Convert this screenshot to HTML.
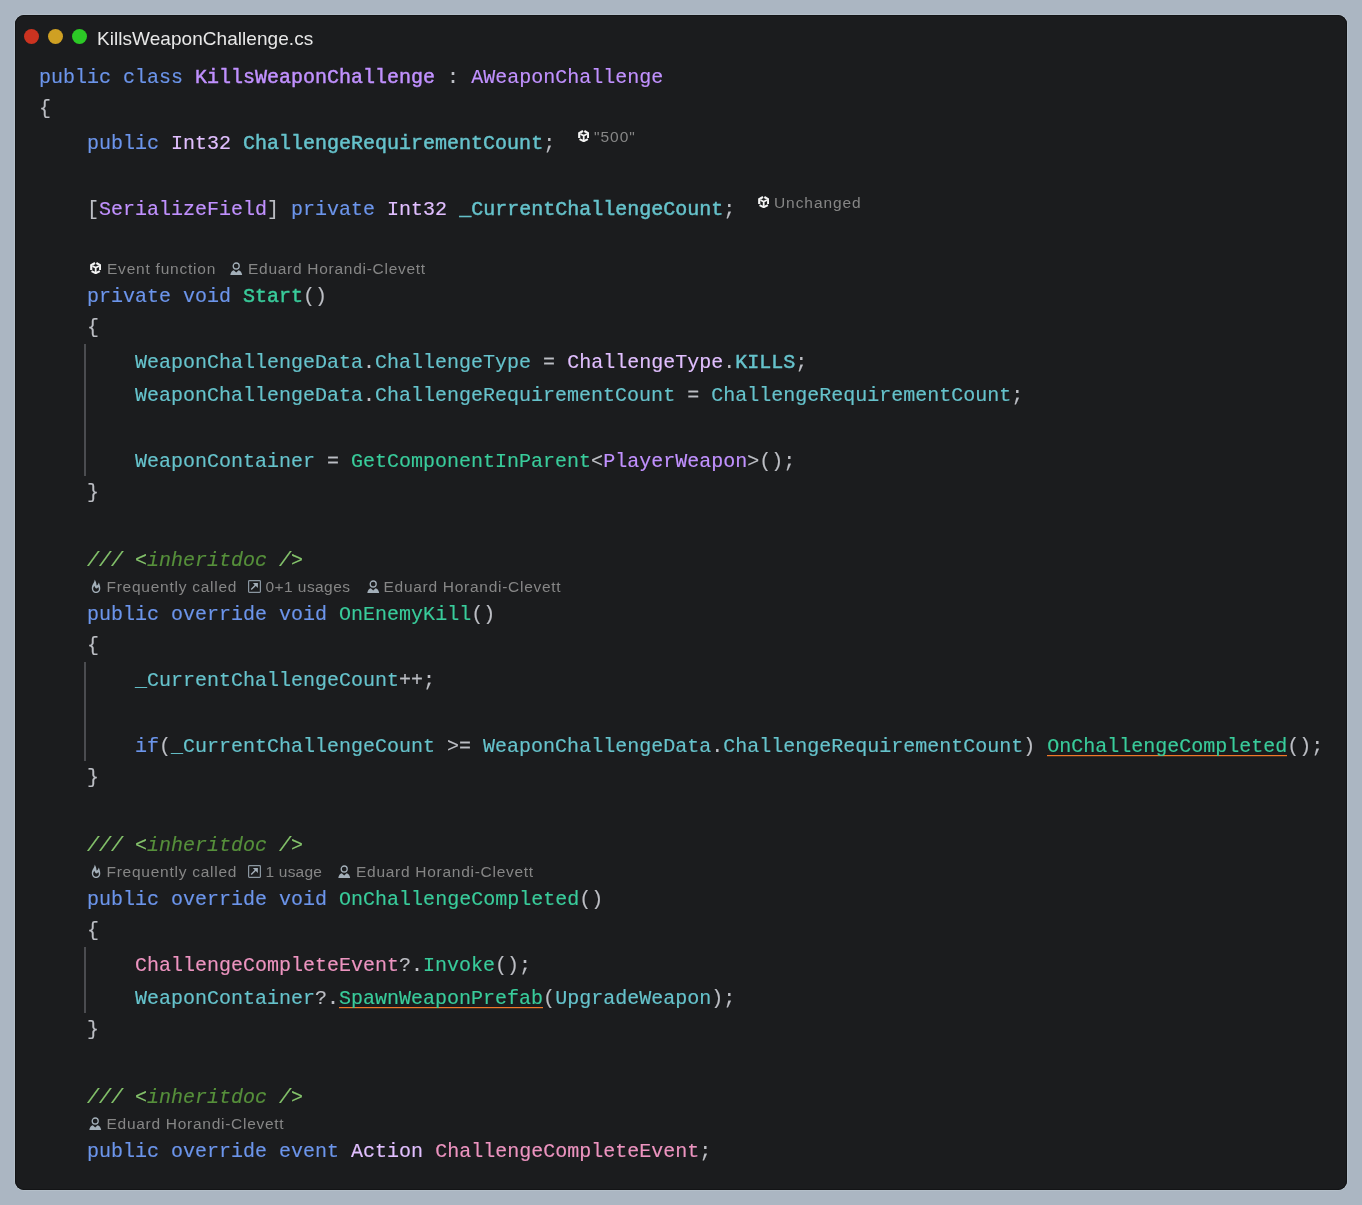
<!DOCTYPE html>
<html><head><meta charset="utf-8"><title>KillsWeaponChallenge.cs</title><style>
html,body{margin:0;padding:0}
body{width:1362px;height:1205px;background:#abb6c2;position:relative;overflow:hidden}
.wrap{position:absolute;left:0;top:0;width:1362px;height:1205px;will-change:transform}
.win{position:absolute;left:15px;top:15px;width:1332px;height:1175px;background:#1b1c1e;border-radius:9px;box-shadow:0 0 0 1px #b4bfc9, inset 0 0 0 1px #131416}
.dot{position:absolute;width:15px;height:15px;border-radius:50%}
.title{position:absolute;left:97px;top:28px;letter-spacing:0.05px;font-family:"Liberation Sans",sans-serif;font-size:19px;line-height:21px;color:#e8e8e8;white-space:pre}
.l{position:absolute;left:39px;height:33px;line-height:33px;font-family:"Liberation Mono",monospace;font-size:20px;white-space:pre;color:#bcbec4;-webkit-text-stroke:0.15px currentColor}
.k{color:#6c95eb}
.c{color:#c191ff}
.cb{color:#c191ff;-webkit-text-stroke:0.45px #c191ff}
.s{color:#e1bfff}
.f{color:#66c3cc}
.fb{color:#66c3cc;-webkit-text-stroke:0.45px #66c3cc}
.m{color:#39cc9b}
.mb{color:#39cc9b;-webkit-text-stroke:0.45px #39cc9b}
.mu{color:#39cc9b}
.ul{position:absolute;height:1px;background:#f07828;box-shadow:0 0.5px 0 rgba(240,120,40,0.4)}
.e{color:#ed94c0}
.p{color:#bcbec4}
.br{position:relative;top:-2px}
.d{color:#85c46c;font-style:italic}
.dt{color:#56903b;font-style:italic}
.ht{position:absolute;font-family:"Liberation Sans",sans-serif;font-size:15.5px;line-height:21px;color:#868686;white-space:pre}
.ic{position:absolute}
.g{position:absolute;left:84px;width:2px;background:#4b4c50}
</style></head>
<body><div class="wrap">
<div class="win"></div>
<div class="dot" style="left:24px;top:29px;background:#cc3320"></div>
<div class="dot" style="left:48px;top:29px;background:#cfa023"></div>
<div class="dot" style="left:72px;top:29px;background:#2cc926"></div>
<div class="title">KillsWeaponChallenge.cs</div>
<div class="ul" style="left:1047px;top:755px;width:240px"></div>
<div class="ul" style="left:339px;top:1007px;width:204px"></div>
<div class="g" style="top:344px;height:132px"></div>
<div class="g" style="top:662px;height:99px"></div>
<div class="g" style="top:947px;height:66px"></div>
<div class="l" style="top:61px"><span class="k">public</span><span class="p"> </span><span class="k">class</span><span class="p"> </span><span class="cb">KillsWeaponChallenge</span><span class="p"> : </span><span class="c">AWeaponChallenge</span></div>
<div class="l" style="top:94px"><span class="p br">{</span></div>
<div class="l" style="top:127px"><span class="p">    </span><span class="k">public</span><span class="p"> </span><span class="s">Int32</span><span class="p"> </span><span class="fb">ChallengeRequirementCount</span><span class="p">;</span></div>
<svg class="ic" width="11.4" height="12" viewBox="0 0 12 12.6" style="left:578px;top:130px"><g fill="none" stroke="#f4f4f4" stroke-linejoin="miter" stroke-linecap="butt"><path d="M5.3 1.0 L1.3 3.3 V8.5" stroke-width="2.3"/><path d="M6.7 1.0 L10.7 3.3 V8.5" stroke-width="2.3"/><path d="M1.6 9.6 L6 11.8 L10.4 9.6" stroke-width="2.1"/><path d="M2.6 4.1 L6 6.1 L9.4 4.1 M6 6.1 V11.2" stroke-width="1.9"/></g></svg>
<span class="ht" style="left:594px;top:126px;letter-spacing:1.0px">&quot;500&quot;</span>
<div class="l" style="top:160px"></div>
<div class="l" style="top:193px"><span class="p">    [</span><span class="c">SerializeField</span><span class="p">] </span><span class="k">private</span><span class="p"> </span><span class="s">Int32</span><span class="p"> </span><span class="fb">_CurrentChallengeCount</span><span class="p">;</span></div>
<svg class="ic" width="11.4" height="12" viewBox="0 0 12 12.6" style="left:758px;top:196px"><g fill="none" stroke="#f4f4f4" stroke-linejoin="miter" stroke-linecap="butt"><path d="M5.3 1.0 L1.3 3.3 V8.5" stroke-width="2.3"/><path d="M6.7 1.0 L10.7 3.3 V8.5" stroke-width="2.3"/><path d="M1.6 9.6 L6 11.8 L10.4 9.6" stroke-width="2.1"/><path d="M2.6 4.1 L6 6.1 L9.4 4.1 M6 6.1 V11.2" stroke-width="1.9"/></g></svg>
<span class="ht" style="left:774px;top:192px;letter-spacing:0.925px">Unchanged</span>
<div class="l" style="top:226px"></div>
<svg class="ic" width="11.4" height="12" viewBox="0 0 12 12.6" style="left:90px;top:262px"><g fill="none" stroke="#f4f4f4" stroke-linejoin="miter" stroke-linecap="butt"><path d="M5.3 1.0 L1.3 3.3 V8.5" stroke-width="2.3"/><path d="M6.7 1.0 L10.7 3.3 V8.5" stroke-width="2.3"/><path d="M1.6 9.6 L6 11.8 L10.4 9.6" stroke-width="2.1"/><path d="M2.6 4.1 L6 6.1 L9.4 4.1 M6 6.1 V11.2" stroke-width="1.9"/></g></svg>
<span class="ht" style="left:107px;top:258px;letter-spacing:0.772px">Event function</span>
<svg class="ic" width="12.5" height="13.5" viewBox="0 0 12.5 13.5" style="left:230px;top:261.5px"><circle cx="6.2" cy="4.0" r="3.0" fill="none" stroke="#a3afb9" stroke-width="1.3"/><path d="M0.3 13.1 C0.6 10.5 2 8.7 3.8 8.3 L6.2 10.5 L8.6 8.3 C10.4 8.7 11.9 10.5 12.2 13.1 Z" fill="#a3afb9"/></svg>
<span class="ht" style="left:248px;top:258px;letter-spacing:0.724px">Eduard Horandi-Clevett</span>
<div class="l" style="top:280px"><span class="p">    </span><span class="k">private</span><span class="p"> </span><span class="k">void</span><span class="p"> </span><span class="mb">Start</span><span class="p">()</span></div>
<div class="l" style="top:313px"><span class="p">    </span><span class="p br">{</span></div>
<div class="l" style="top:346px"><span class="p">        </span><span class="f">WeaponChallengeData</span><span class="p">.</span><span class="f">ChallengeType</span><span class="p"> = </span><span class="s">ChallengeType</span><span class="p">.</span><span class="fb">KILLS</span><span class="p">;</span></div>
<div class="l" style="top:379px"><span class="p">        </span><span class="f">WeaponChallengeData</span><span class="p">.</span><span class="f">ChallengeRequirementCount</span><span class="p"> = </span><span class="f">ChallengeRequirementCount</span><span class="p">;</span></div>
<div class="l" style="top:412px"></div>
<div class="l" style="top:445px"><span class="p">        </span><span class="f">WeaponContainer</span><span class="p"> = </span><span class="m">GetComponentInParent</span><span class="p">&lt;</span><span class="c">PlayerWeapon</span><span class="p">&gt;();</span></div>
<div class="l" style="top:478px"><span class="p">    </span><span class="p br">}</span></div>
<div class="l" style="top:511px"></div>
<div class="l" style="top:544px"><span class="p">    </span><span class="d">/// &lt;</span><span class="dt">inheritdoc</span><span class="d"> /&gt;</span></div>
<svg class="ic" width="10" height="14.5" viewBox="0 0 10 14.5" style="left:90.5px;top:578.5px"><path d="M3.6 0.4 C4 3.2 1 5 0.8 9 C0.7 12 2.8 14.1 5 14.1 C7.4 14.1 9.3 12.2 9.3 9.4 C9.3 7 8.5 5.2 7.8 3.4 C7.4 4.9 6.6 6 5.5 6.6 C5.5 4.3 5 2.2 3.6 0.4 Z M3.5 6.8 C3.7 8.2 4.5 9.4 5.5 9.6 C6.3 9.4 6.9 8.8 7.3 8 C7.8 9 8 10 7.7 11 C7.2 12.1 6.2 12.7 5 12.7 C3.4 12.7 2.2 11.5 2.2 9.8 C2.2 8.6 2.7 7.6 3.5 6.8 Z" fill="#a3afb9" fill-rule="evenodd"/></svg>
<span class="ht" style="left:106.5px;top:576px;letter-spacing:0.74px">Frequently called</span>
<svg class="ic" width="13" height="13" viewBox="0 0 13 13" style="left:248px;top:580px"><rect x="0.6" y="0.6" width="11.8" height="11.8" rx="0.8" fill="none" stroke="#8a96a0" stroke-width="1.2"/><path d="M3.2 9.6 L8.2 4.6" stroke="#a3afb9" stroke-width="1.4"/><path d="M4.8 3 H9.9 V8.1 Z" fill="#a3afb9"/></svg>
<span class="ht" style="left:265.5px;top:576px;letter-spacing:0.432px">0+1 usages</span>
<svg class="ic" width="12.5" height="13.5" viewBox="0 0 12.5 13.5" style="left:367px;top:579.5px"><circle cx="6.2" cy="4.0" r="3.0" fill="none" stroke="#a3afb9" stroke-width="1.3"/><path d="M0.3 13.1 C0.6 10.5 2 8.7 3.8 8.3 L6.2 10.5 L8.6 8.3 C10.4 8.7 11.9 10.5 12.2 13.1 Z" fill="#a3afb9"/></svg>
<span class="ht" style="left:383.5px;top:576px;letter-spacing:0.724px">Eduard Horandi-Clevett</span>
<div class="l" style="top:598px"><span class="p">    </span><span class="k">public</span><span class="p"> </span><span class="k">override</span><span class="p"> </span><span class="k">void</span><span class="p"> </span><span class="m">OnEnemyKill</span><span class="p">()</span></div>
<div class="l" style="top:631px"><span class="p">    </span><span class="p br">{</span></div>
<div class="l" style="top:664px"><span class="p">        </span><span class="f">_CurrentChallengeCount</span><span class="p">++;</span></div>
<div class="l" style="top:697px"></div>
<div class="l" style="top:730px"><span class="p">        </span><span class="k">if</span><span class="p">(</span><span class="f">_CurrentChallengeCount</span><span class="p"> &gt;= </span><span class="f">WeaponChallengeData</span><span class="p">.</span><span class="f">ChallengeRequirementCount</span><span class="p">) </span><span class="mu">OnChallengeCompleted</span><span class="p">();</span></div>
<div class="l" style="top:763px"><span class="p">    </span><span class="p br">}</span></div>
<div class="l" style="top:796px"></div>
<div class="l" style="top:829px"><span class="p">    </span><span class="d">/// &lt;</span><span class="dt">inheritdoc</span><span class="d"> /&gt;</span></div>
<svg class="ic" width="10" height="14.5" viewBox="0 0 10 14.5" style="left:90.5px;top:863.5px"><path d="M3.6 0.4 C4 3.2 1 5 0.8 9 C0.7 12 2.8 14.1 5 14.1 C7.4 14.1 9.3 12.2 9.3 9.4 C9.3 7 8.5 5.2 7.8 3.4 C7.4 4.9 6.6 6 5.5 6.6 C5.5 4.3 5 2.2 3.6 0.4 Z M3.5 6.8 C3.7 8.2 4.5 9.4 5.5 9.6 C6.3 9.4 6.9 8.8 7.3 8 C7.8 9 8 10 7.7 11 C7.2 12.1 6.2 12.7 5 12.7 C3.4 12.7 2.2 11.5 2.2 9.8 C2.2 8.6 2.7 7.6 3.5 6.8 Z" fill="#a3afb9" fill-rule="evenodd"/></svg>
<span class="ht" style="left:106.5px;top:861px;letter-spacing:0.74px">Frequently called</span>
<svg class="ic" width="13" height="13" viewBox="0 0 13 13" style="left:248px;top:865px"><rect x="0.6" y="0.6" width="11.8" height="11.8" rx="0.8" fill="none" stroke="#8a96a0" stroke-width="1.2"/><path d="M3.2 9.6 L8.2 4.6" stroke="#a3afb9" stroke-width="1.4"/><path d="M4.8 3 H9.9 V8.1 Z" fill="#a3afb9"/></svg>
<span class="ht" style="left:265.5px;top:861px;letter-spacing:0.195px">1 usage</span>
<svg class="ic" width="12.5" height="13.5" viewBox="0 0 12.5 13.5" style="left:338.2px;top:864.5px"><circle cx="6.2" cy="4.0" r="3.0" fill="none" stroke="#a3afb9" stroke-width="1.3"/><path d="M0.3 13.1 C0.6 10.5 2 8.7 3.8 8.3 L6.2 10.5 L8.6 8.3 C10.4 8.7 11.9 10.5 12.2 13.1 Z" fill="#a3afb9"/></svg>
<span class="ht" style="left:356px;top:861px;letter-spacing:0.724px">Eduard Horandi-Clevett</span>
<div class="l" style="top:883px"><span class="p">    </span><span class="k">public</span><span class="p"> </span><span class="k">override</span><span class="p"> </span><span class="k">void</span><span class="p"> </span><span class="m">OnChallengeCompleted</span><span class="p">()</span></div>
<div class="l" style="top:916px"><span class="p">    </span><span class="p br">{</span></div>
<div class="l" style="top:949px"><span class="p">        </span><span class="e">ChallengeCompleteEvent</span><span class="p">?.</span><span class="m">Invoke</span><span class="p">();</span></div>
<div class="l" style="top:982px"><span class="p">        </span><span class="f">WeaponContainer</span><span class="p">?.</span><span class="mu">SpawnWeaponPrefab</span><span class="p">(</span><span class="f">UpgradeWeapon</span><span class="p">);</span></div>
<div class="l" style="top:1015px"><span class="p">    </span><span class="p br">}</span></div>
<div class="l" style="top:1048px"></div>
<div class="l" style="top:1081px"><span class="p">    </span><span class="d">/// &lt;</span><span class="dt">inheritdoc</span><span class="d"> /&gt;</span></div>
<svg class="ic" width="12.5" height="13.5" viewBox="0 0 12.5 13.5" style="left:89.2px;top:1116.5px"><circle cx="6.2" cy="4.0" r="3.0" fill="none" stroke="#a3afb9" stroke-width="1.3"/><path d="M0.3 13.1 C0.6 10.5 2 8.7 3.8 8.3 L6.2 10.5 L8.6 8.3 C10.4 8.7 11.9 10.5 12.2 13.1 Z" fill="#a3afb9"/></svg>
<span class="ht" style="left:106.5px;top:1113px;letter-spacing:0.724px">Eduard Horandi-Clevett</span>
<div class="l" style="top:1135px"><span class="p">    </span><span class="k">public</span><span class="p"> </span><span class="k">override</span><span class="p"> </span><span class="k">event</span><span class="p"> </span><span class="s">Action</span><span class="p"> </span><span class="e">ChallengeCompleteEvent</span><span class="p">;</span></div>
</div></body></html>
